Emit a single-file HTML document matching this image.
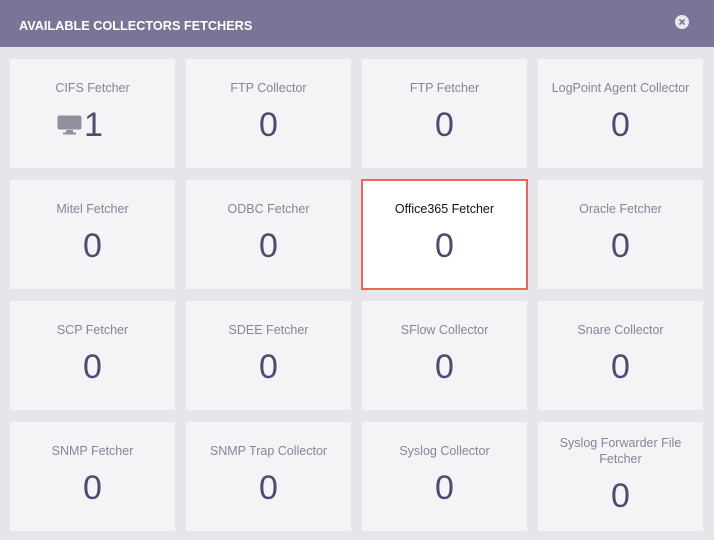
<!DOCTYPE html>
<html><head><meta charset="utf-8"><style>
*{margin:0;padding:0;box-sizing:border-box}
html,body{width:714px;height:540px;overflow:hidden;background:#e5e5ea;font-family:"Liberation Sans",sans-serif}
.hd{position:absolute;left:0;top:0;width:714px;height:47px;background:#7a7597}
.hd .t{position:absolute;left:19px;top:18px;color:#fff;font-size:12.7px;letter-spacing:0;line-height:16px;font-weight:600}
.x{position:absolute;left:675px;top:15px;width:14px;height:14px;border-radius:50%;background:#e8e7ee}
.c{position:absolute;width:165px;height:109px;background:#f4f4f6;text-align:center}
.c .n{position:absolute;left:0;right:0;top:81px;font-size:12.5px;color:#858597;line-height:16px}
.c .v{position:absolute;left:0;right:0;top:105px;font-size:34px;color:#4b4d6f;line-height:40px}
.sel{background:#fff;border:2px solid #e8675a}
.sel .n{color:#111}
</style></head><body>
<div class="hd"><div class="t">AVAILABLE COLLECTORS FETCHERS</div>
<div class="x"><svg width="14" height="14"><path d="M4.5 4.5L9.5 9.5M9.5 4.5L4.5 9.5" stroke="#7a7597" stroke-width="1.6"/></svg></div></div>

<div class="c" style="left:10px;top:59px"><div class="n" style="top:21px">CIFS Fetcher</div>
<svg style="position:absolute;left:47px;top:56px" width="26" height="20"><rect x="0.5" y="0.5" width="24" height="14" rx="2" fill="#8f8f9e"/><rect x="9" y="15" width="7" height="3" fill="#8f8f9e"/><rect x="6" y="17.5" width="13" height="2" fill="#8f8f9e"/></svg>
<div style="position:absolute;left:74px;top:46px;font-size:34px;color:#4b4d6f;line-height:40px">1</div></div>
<div class="c" style="left:186px;top:59px"><div class="n" style="top:21px">FTP Collector</div><div class="v" style="top:46px">0</div></div>
<div class="c" style="left:362px;top:59px"><div class="n" style="top:21px">FTP Fetcher</div><div class="v" style="top:46px">0</div></div>
<div class="c" style="left:538px;top:59px"><div class="n" style="top:21px">LogPoint Agent Collector</div><div class="v" style="top:46px">0</div></div>

<div class="c" style="left:10px;top:180px"><div class="n" style="top:21px">Mitel Fetcher</div><div class="v" style="top:46px">0</div></div>
<div class="c" style="left:186px;top:180px"><div class="n" style="top:21px">ODBC Fetcher</div><div class="v" style="top:46px">0</div></div>
<div class="c sel" style="left:361px;top:179px;width:167px;height:111px"><div class="n" style="top:20px">Office365 Fetcher</div><div class="v" style="top:45px">0</div></div>
<div class="c" style="left:538px;top:180px"><div class="n" style="top:21px">Oracle Fetcher</div><div class="v" style="top:46px">0</div></div>

<div class="c" style="left:10px;top:301px"><div class="n" style="top:21px">SCP Fetcher</div><div class="v" style="top:46px">0</div></div>
<div class="c" style="left:186px;top:301px"><div class="n" style="top:21px">SDEE Fetcher</div><div class="v" style="top:46px">0</div></div>
<div class="c" style="left:362px;top:301px"><div class="n" style="top:21px">SFlow Collector</div><div class="v" style="top:46px">0</div></div>
<div class="c" style="left:538px;top:301px"><div class="n" style="top:21px">Snare Collector</div><div class="v" style="top:46px">0</div></div>

<div class="c" style="left:10px;top:422px"><div class="n" style="top:21px">SNMP Fetcher</div><div class="v" style="top:46px">0</div></div>
<div class="c" style="left:186px;top:422px"><div class="n" style="top:21px">SNMP Trap Collector</div><div class="v" style="top:46px">0</div></div>
<div class="c" style="left:362px;top:422px"><div class="n" style="top:21px">Syslog Collector</div><div class="v" style="top:46px">0</div></div>
<div class="c" style="left:538px;top:422px"><div class="n" style="top:13px">Syslog Forwarder File<br>Fetcher</div><div class="v" style="top:54px">0</div></div>
</body></html>
